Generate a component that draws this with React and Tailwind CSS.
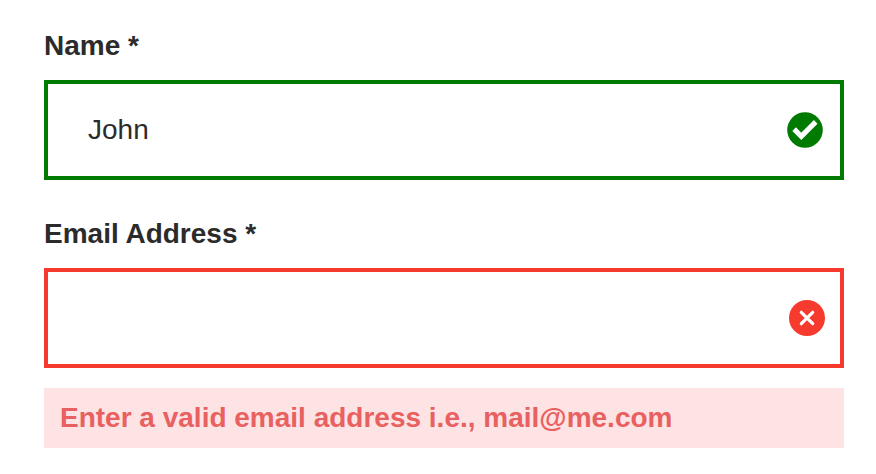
function CheckIcon() {
  return (
    <svg className="size-9" viewBox="0 0 36 36" fill="none" aria-hidden="true">
      <circle cx="18" cy="18" r="17.8" fill="#007a00" />
      <path d="M7.1 17.1 L14.3 24.3 L28.7 9.9" stroke="#fff" strokeWidth="5.1" />
    </svg>
  );
}

function ErrorIcon() {
  return (
    <svg className="size-9" viewBox="0 0 36 36" fill="none" aria-hidden="true">
      <circle cx="18" cy="18" r="18" fill="#f63a2e" />
      <path d="M12.3 12.3 L23.7 23.7 M23.7 12.3 L12.3 23.7" stroke="#fff" strokeWidth="3.2" strokeLinecap="round" />
    </svg>
  );
}

export default function App() {
  return (
    <main className="h-[474px] w-[876px] bg-white pl-11 pr-8 pt-7 font-['Liberation_Sans',Arial,sans-serif] text-[28px] leading-9 text-[#2b2b2b]">
      <label className="block font-bold">Name *</label>
      <div className="mt-4 flex h-[100px] items-center justify-between border-4 border-[#007a00] pl-10 pr-[17px]">
        <span>John</span>
        <CheckIcon />
      </div>
      <label className="mt-9 block font-bold">Email Address *</label>
      <div className="mt-4 flex h-[100px] items-center justify-end border-4 border-[#f63a2e] pr-[15px]">
        <ErrorIcon />
      </div>
      <p className="mt-5 flex h-[60px] items-center bg-[#fee3e4] px-4 font-bold text-[#e96060]">
        Enter a valid email address i.e., mail@me.com
      </p>
    </main>
  );
}
